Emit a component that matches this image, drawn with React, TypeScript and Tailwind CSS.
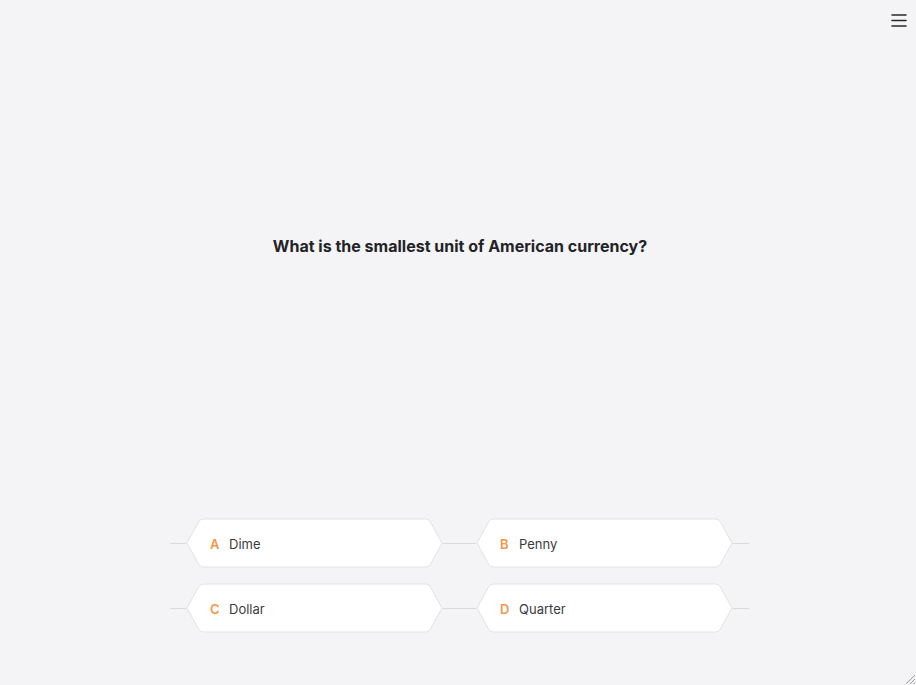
import React from 'react';

const answers = [
  { key: 'A', text: 'Dime' },
  { key: 'B', text: 'Penny' },
  { key: 'C', text: 'Dollar' },
  { key: 'D', text: 'Quarter' },
];

function Line({ w }: { w: string }) {
  return <div className={`h-px bg-[#d9dadd] ${w}`} />;
}

function HexButton({ letter, text }: { letter: string; text: string }) {
  return (
    <button className="relative flex h-[50px] w-[257px] items-center pl-6 pt-px text-left">
      <svg className="absolute inset-0" width="257" height="50" viewBox="0 0 257 50">
        <path
          d="M1,25 L12.5,4 Q14.2,1 17.5,1 L239.5,1 Q242.8,1 244.5,4 L256,25 L244.5,46 Q242.8,49 239.5,49 L17.5,49 Q14.2,49 12.5,46 Z"
          fill="#ffffff"
          stroke="#e1e2e5"
          strokeWidth="1"
          strokeLinejoin="round"
        />
      </svg>
      <span className="relative flex items-baseline leading-5">
        <span className="w-[19px] text-[13px] font-semibold text-[#f7954a]">{letter}</span>
        <span className="text-[13px] text-[#3a3b3f]">{text}</span>
      </span>
    </button>
  );
}

export default function App() {
  return (
    <div
      className="relative flex h-screen flex-col bg-[#f4f4f6] text-[#222326]"
      style={{ fontFamily: 'Inter, "Noto Sans", sans-serif' }}
    >
      <header className="flex justify-end pr-[9px] pt-[13px]">
        <svg width="16" height="14" viewBox="0 0 16 14" className="text-[#27282b]">
          <path d="M1 2h14M1 7.5h14M1 13h14" stroke="currentColor" strokeWidth="1.6" strokeLinecap="round" />
        </svg>
      </header>

      <main className="flex flex-1 flex-col">
        <h1 className="pl-[4px] pt-[209px] text-center text-[16px] font-bold leading-5">
          What is the smallest unit of American currency?
        </h1>

        <div className="mt-auto flex flex-col items-center gap-[15px] pb-[52px] pl-[3px]">
          {[0, 2].map((i) => (
            <div key={i} className="flex items-center">
              <Line w="w-[16px]" />
              <HexButton letter={answers[i].key} text={answers[i].text} />
              <Line w="w-[33px]" />
              <HexButton letter={answers[i + 1].key} text={answers[i + 1].text} />
              <Line w="w-[16px]" />
            </div>
          ))}
        </div>
      </main>

      <svg className="absolute bottom-0 right-0" width="12" height="12" viewBox="0 0 12 12">
        <path d="M11 2L2 11M11 6L6 11M11 9.5L9.5 11" stroke="#9a9ba0" strokeWidth="1" />
      </svg>
    </div>
  );
}
